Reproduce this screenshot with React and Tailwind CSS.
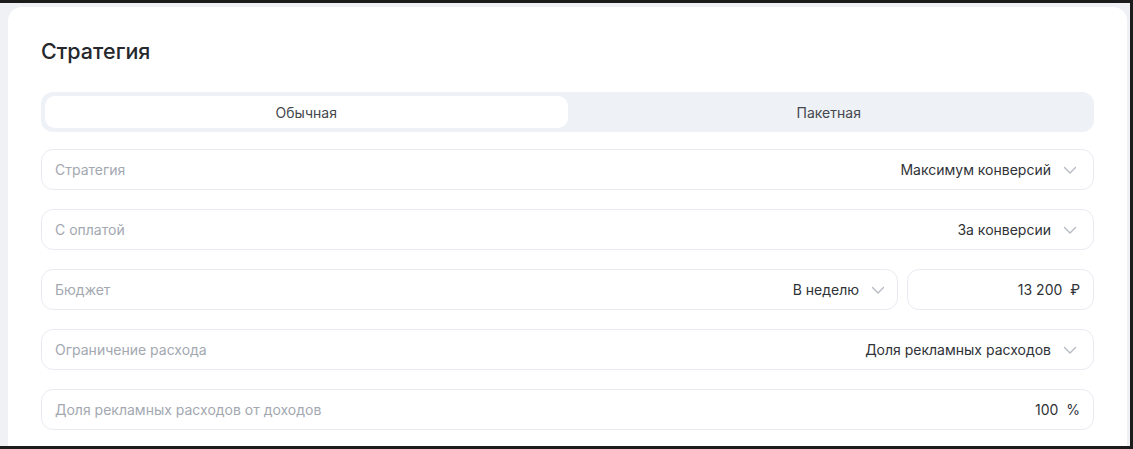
import React, { useState } from 'react';

const Chevron = () => (
  <svg className="w-[16px] h-[16px] text-[#b4b9c2] shrink-0" viewBox="0 0 16 16" fill="none" stroke="currentColor">
    <path d="M2.5 5.5l5.5 5.5 5.5-5.5" strokeWidth="1.3" strokeLinecap="round" strokeLinejoin="round" />
  </svg>
);

const SelectRow = ({ label, value }) => (
  <div className="h-[41px] rounded-[12px] border border-[#e9ebf0] bg-white flex items-center justify-between pl-[13px] pr-[15px]">
    <span className="text-[#a3a8b1]">{label}</span>
    <span className="flex items-center gap-[11px] text-[#2f3237]">
      {value}
      <Chevron />
    </span>
  </div>
);

const App = () => {
  const [tab, setTab] = useState('normal');

  return (
    <div className="w-[1133px] h-[449px] bg-[#1c1c1c] pt-[3px] pb-[3px] pr-[3px] overflow-hidden" style={{ fontFamily: 'Inter, "Noto Sans", sans-serif' }}>
      <div className="h-full bg-[#eff1f5] pl-[8px] pr-[3px] pt-[4px]">
        <div className="h-full bg-white rounded-t-[14px] pl-[33px] pr-[33px] pt-[30px] text-[14px]">
          {/* Header */}
          <h1 className="text-[21.5px] font-medium text-[#25282d] leading-[28px] mb-[27px]">Стратегия</h1>

          {/* Segmented control */}
          <div className="h-[40px] bg-[#eef1f6] rounded-[12px] p-[4px] flex mb-[17px]">
            <button
              onClick={() => setTab('normal')}
              className={`flex-1 rounded-[10px] text-[#45484d] ${tab === 'normal' ? 'bg-white' : ''}`}
            >
              Обычная
            </button>
            <button
              onClick={() => setTab('packet')}
              className={`flex-1 rounded-[10px] text-[#45484d] ${tab === 'packet' ? 'bg-white' : ''}`}
            >
              Пакетная
            </button>
          </div>

          <div className="flex flex-col gap-[19px]">
            <SelectRow label="Стратегия" value="Максимум конверсий" />
            <SelectRow label="С оплатой" value="За конверсии" />

            {/* Budget */}
            <div className="flex gap-[9px]">
              <div className="flex-1 h-[41px] rounded-[12px] border border-[#e9ebf0] flex items-center justify-between pl-[13px] pr-[11px]">
                <span className="text-[#a3a8b1]">Бюджет</span>
                <span className="flex items-center gap-[11px] text-[#2f3237]">
                  В неделю
                  <Chevron />
                </span>
              </div>
              <div className="w-[187px] h-[41px] rounded-[12px] border border-[#e9ebf0] flex items-center justify-end pr-[13px] text-[#2f3237]">
                13 200&nbsp;&nbsp;₽
              </div>
            </div>

            <SelectRow label="Ограничение расхода" value="Доля рекламных расходов" />

            <div className="h-[41px] rounded-[12px] border border-[#e9ebf0] flex items-center justify-between pl-[13px] pr-[13px]">
              <span className="text-[#a3a8b1]">Доля рекламных расходов от доходов</span>
              <span className="text-[#2f3237]">100&nbsp;&nbsp;%</span>
            </div>
          </div>
        </div>
      </div>
    </div>
  );
};

export default App;
